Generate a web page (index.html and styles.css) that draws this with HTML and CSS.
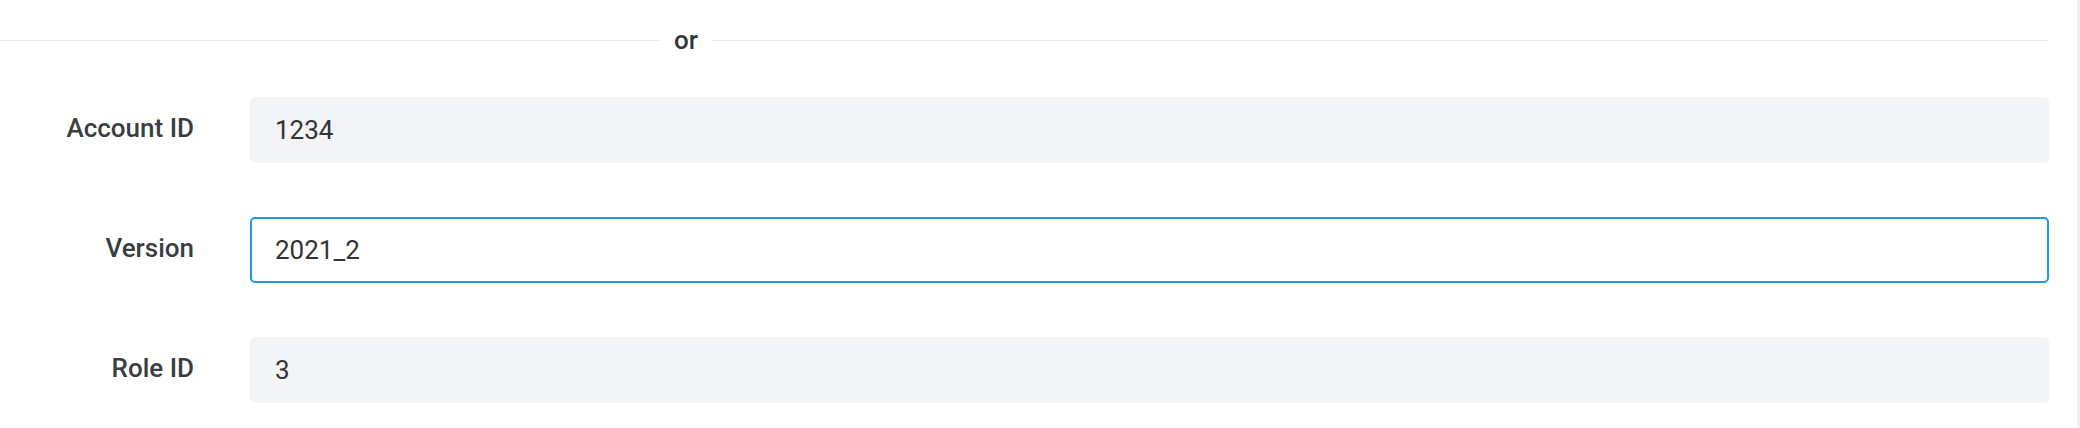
FILE: index.html
```html
<!DOCTYPE html>
<html lang="en">
<head>
<meta charset="utf-8">
<title>Form</title>
<link rel="stylesheet" href="styles.css">
</head>
<body>
<div class="page">
  <div class="content">
    <div class="divider">
      <span class="line line-left"></span>
      <span class="or">or</span>
      <span class="line line-right"></span>
    </div>
    <form class="form">
      <div class="row">
        <label class="label" for="account">Account ID</label>
        <input class="field" id="account" type="text" value="1234" readonly>
      </div>
      <div class="row">
        <label class="label" for="version">Version</label>
        <input class="field field-active" id="version" type="text" value="2021_2">
      </div>
      <div class="row">
        <label class="label" for="role">Role ID</label>
        <input class="field" id="role" type="text" value="3" readonly>
      </div>
    </form>
  </div>
  <div class="scrollbar"></div>
</div>
</body>
</html>
```
FILE: styles.css
```css
* { box-sizing: border-box; }
html, body {
  margin: 0;
  padding: 0;
  background: #ffffff;
}
body {
  font-family: Roboto, "Liberation Sans", sans-serif;
  color: #3a3d41;
}
.page {
  display: flex;
  width: 2080px;
  height: 428px;
  overflow: hidden;
}
.content {
  flex: 1;
  padding-right: 28px;
}
.scrollbar {
  width: 3px;
  background: #f0f0f0;
}
.divider {
  display: flex;
  align-items: center;
  height: 30px;
  margin-top: 25px;
}
.line {
  height: 1px;
  background: #ebebeb;
}
.line-left { width: 661px; }
.line-right { flex: 1; }
.or {
  padding: 0 13px;
  font-size: 26px;
  font-weight: 500;
  line-height: 30px;
  color: #33363a;
}
.form {
  display: flex;
  flex-direction: column;
  gap: 54px;
  margin-top: 42px;
}
.row {
  display: grid;
  grid-template-columns: 194px 1fr;
  column-gap: 56px;
  align-items: center;
}
.label {
  text-align: right;
  font-size: 26px;
  font-weight: 500;
  color: #3a3e42;
  padding-bottom: 4px;
}
.field {
  display: block;
  width: 100%;
  height: 66px;
  margin: 0;
  padding: 0 25px;
  border: none;
  border-radius: 5px;
  background: #f3f4f6;
  font-family: Roboto, "Liberation Sans", sans-serif;
  font-size: 26px;
  color: #333333;
  outline: none;
}
.field-active {
  background: #ffffff;
  border: 2px solid #2196f3;
  padding: 0 23px;
}
```
